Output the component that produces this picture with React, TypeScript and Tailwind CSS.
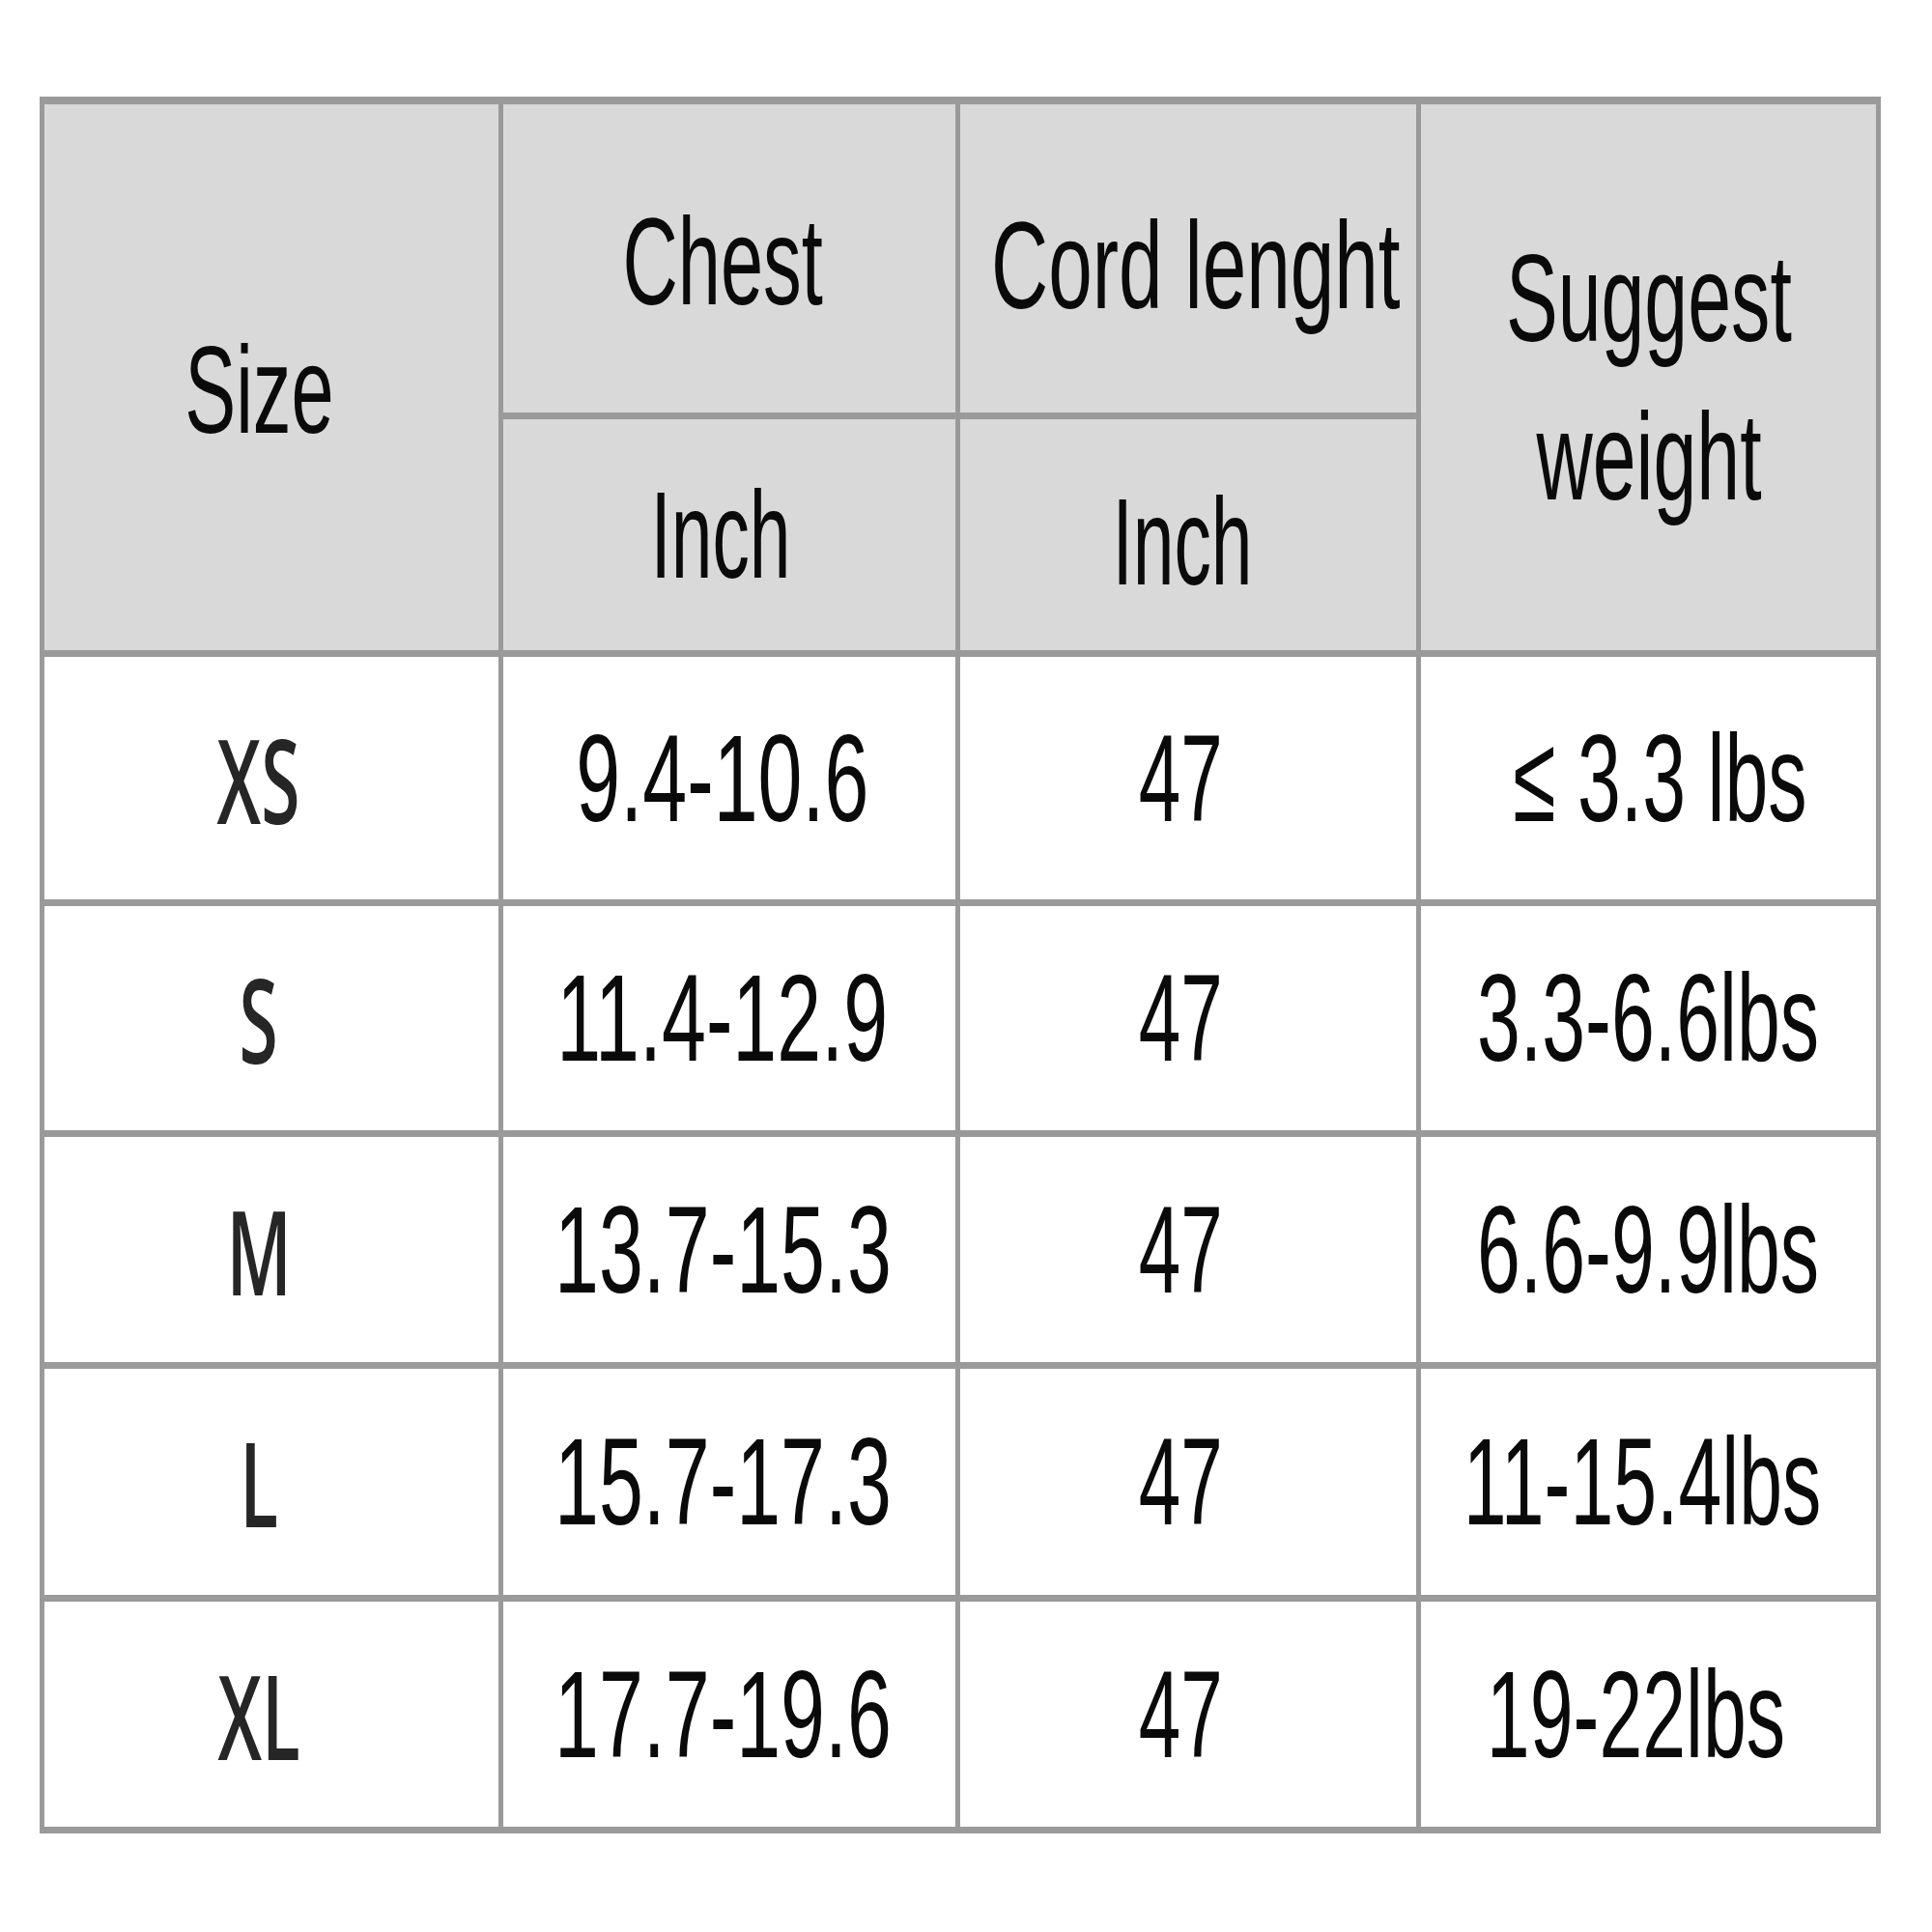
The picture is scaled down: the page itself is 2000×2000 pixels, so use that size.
import { FC, ReactNode } from "react";

const sans = "font-['Liberation_Sans',Arial,sans-serif]";

interface CellProps {
  children: ReactNode;
  className?: string;
}

const Cell: FC<CellProps> = ({ children, className = "" }) => (
  <div className={`flex items-center justify-center overflow-visible ${className}`}>
    {children}
  </div>
);

const Txt: FC<{ children: ReactNode; className?: string }> = ({
  children,
  className = "scale-x-[0.63]",
}) => (
  <span
    className={`inline-block whitespace-nowrap text-[128px] leading-none text-[#0a0a0a] ${sans} ${className}`}
  >
    {children}
  </span>
);

const SizeTxt: FC<{ children: ReactNode }> = ({ children }) => (
  <span className="inline-block whitespace-nowrap text-[122px] leading-none font-semibold text-[#262626] font-['Open_Sans',sans-serif] scale-x-[0.6]">
    {children}
  </span>
);

const rows = [
  { size: "XS", chest: "9.4-10.6", cord: "47", weight: "≤ 3.3 lbs", wPad: "pl-[24px]" },
  { size: "S", chest: "11.4-12.9", cord: "47", weight: "3.3-6.6lbs", wPad: "" },
  { size: "M", chest: "13.7-15.3", cord: "47", weight: "6.6-9.9lbs", wPad: "" },
  { size: "L", chest: "15.7-17.3", cord: "47", weight: "11-15.4lbs", wPad: "pr-[12px]" },
  { size: "XL", chest: "17.7-19.6", cord: "47", weight: "19-22lbs", wPad: "pr-[26px]" },
];

const App: FC = () => {
  return (
    <div className="w-[2000px] h-[2000px] bg-white pt-[100px] pl-[41px]">
      <div className="grid w-fit grid-cols-[470px_468px_472px_471px] grid-rows-[319px_239px_251px_232px_233px_234px_233px] gap-x-[5px] gap-y-[7px] bg-[#9a9a9a] pt-[8px] pl-[5px] pr-[5px] pb-[7px]">
        <Cell className="row-span-2 bg-[#d9d9d9] pr-[26px] pt-[26px]">
          <Txt className="scale-x-[0.62]">Size</Txt>
        </Cell>
        <Cell className="bg-[#d9d9d9] pr-[14px] pt-[6px]">
          <Txt className="scale-x-[0.62]">Chest</Txt>
        </Cell>
        <Cell className="bg-[#d9d9d9] pl-[16px] pt-[14px]">
          <Txt className="scale-x-[0.64]">Cord lenght</Txt>
        </Cell>
        <Cell className="row-span-2 bg-[#d9d9d9]">
          <div className="flex flex-col items-center gap-[36px]">
            <Txt className="scale-x-[0.63]">Suggest</Txt>
            <Txt className="scale-x-[0.63]">weight</Txt>
          </div>
        </Cell>
        <Cell className="bg-[#d9d9d9] pr-[18px]">
          <Txt className="scale-x-[0.6]">Inch</Txt>
        </Cell>
        <Cell className="bg-[#d9d9d9] pr-[12px] pt-[14px]">
          <Txt className="scale-x-[0.6]">Inch</Txt>
        </Cell>

        {rows.map((r) => (
          <>
            <Cell key={`${r.size}-s`} className="bg-white pr-[26px]">
              <SizeTxt>{r.size}</SizeTxt>
            </Cell>
            <Cell key={`${r.size}-c`} className="bg-white pr-[14px]">
              <Txt className="scale-x-[0.645]">{r.chest}</Txt>
            </Cell>
            <Cell key={`${r.size}-l`} className="bg-white pr-[16px]">
              <Txt className="scale-x-[0.61]">{r.cord}</Txt>
            </Cell>
            <Cell key={`${r.size}-w`} className={`bg-white ${r.wPad}`}>
              <Txt className="scale-x-[0.63]">{r.weight}</Txt>
            </Cell>
          </>
        ))}
      </div>
    </div>
  );
};

export default App;
